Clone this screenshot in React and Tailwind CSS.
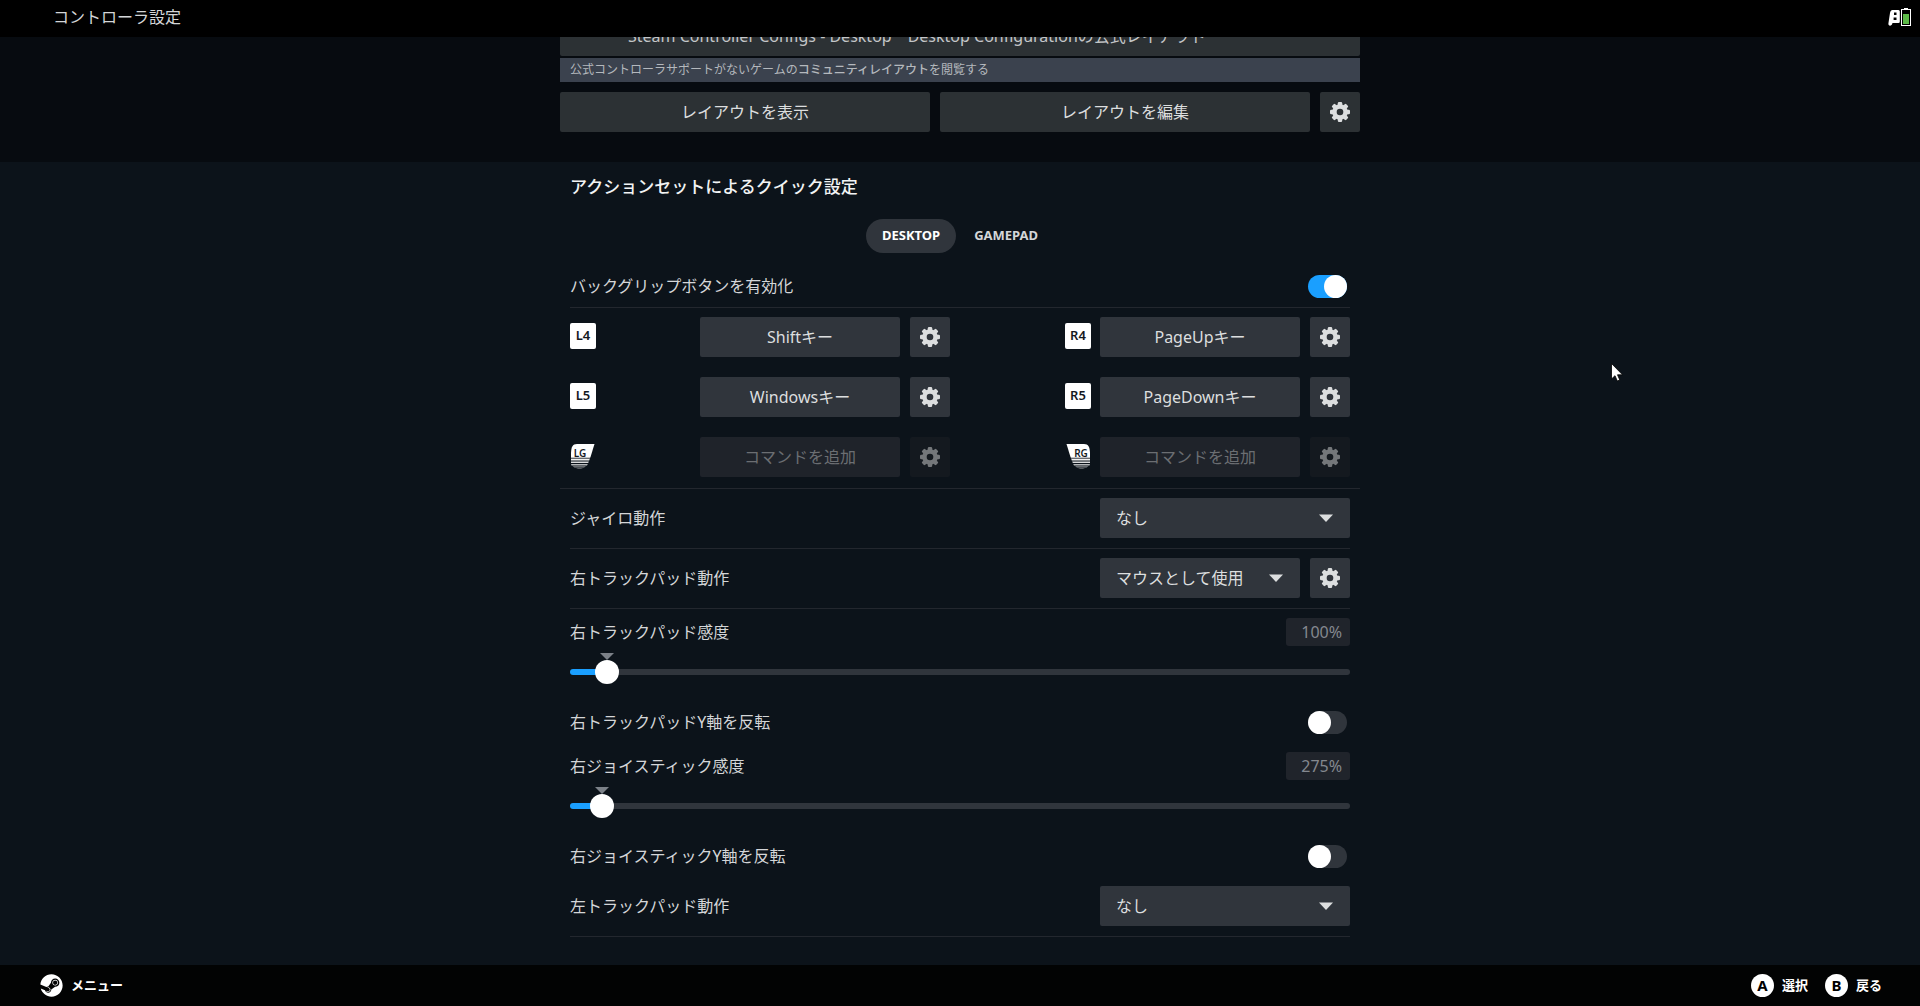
import React, { useState } from 'react';
import { FaSteam } from 'react-icons/fa';

const GearIcon = () => (
  <svg viewBox="0 0 20 20" className="w-5 h-5" fill="currentColor" aria-hidden="true">
    <mask id="gear-hole">
      <rect width="20" height="20" fill="white" />
      <circle cx="10" cy="10" r="3.3" fill="black" />
    </mask>
    <g mask="url(#gear-hole)">
      <circle cx="10" cy="10" r="7.8" />
      {[0, 45, 90, 135].map((angle) => (
        <rect key={angle} x="7.8" y="0" width="4.4" height="20" rx="1.2" transform={`rotate(${angle} 10 10)`} />
      ))}
    </g>
  </svg>
);

const GearButton = ({ label, disabled = false, className = 'bg-[#30353c]' }) => (
  <button
    type="button"
    aria-label={label}
    disabled={disabled}
    className={`w-10 h-10 shrink-0 flex items-center justify-center rounded-xs ${
      disabled ? 'bg-[#14191f] text-[#74777a]' : `text-[#dcdedf] ${className}`
    }`}
  >
    <GearIcon />
  </button>
);

const KeyBadge = ({ name }) => (
  <span className="w-[26px] h-[26px] mb-[3px] flex items-center justify-center rounded-xs bg-white text-[#14191f] text-[13px] leading-none font-semibold">
    {name}
  </span>
);

// Capacitive grip glyph, the right one is the mirrored shape
const GripBadge = ({ name, mirrored = false }) => (
  <svg viewBox="0 0 26 26" className="w-[26px] h-[26px] mb-[3px]" role="img" aria-label={name}>
    <g fill="white" transform={mirrored ? 'translate(26 0) scale(-1 1)' : undefined}>
      <path d="M7 1H24.500L20.500 14H1V10C1.300 4 2.500 1 7 1Z" />
      <path d="M1 14H20.500L19.900 15.500H1Z" opacity="0.75" />
      <path d="M1 16H19.700L19.200 17.500H1Z" opacity="0.95" />
      <path d="M1 18.500H18.800L18.200 20H1Z" opacity="0.85" />
      <path d="M1 21H17.800L17 22.500H1.500Z" opacity="0.7" />
      <path d="M2.500 23.300H16L14 24.600H4.500Z" opacity="0.5" />
      <path d="M6 25H13L11 26H8Z" opacity="0.3" />
    </g>
    <text x={mirrored ? 16 : 10} y="13.5" textAnchor="middle" fontSize="10" fontWeight="600" fill="#14191f">
      {name}
    </text>
  </svg>
);

const Binding = ({ name, command, grip = false, mirrored = false }) => (
  <div className="flex items-center">
    {grip ? <GripBadge name={name} mirrored={mirrored} /> : <KeyBadge name={name} />}
    <button
      type="button"
      disabled={!command}
      className={`ml-auto w-[200px] h-10 rounded-xs ${
        command ? 'bg-[#30353c] text-[#dcdedf]' : 'bg-[#1f232a] text-[#6b6e72]'
      }`}
    >
      {command || 'コマンドを追加'}
    </button>
    <div className="ml-[10px]">
      <GearButton label={`${name}の設定`} disabled={!command} />
    </div>
  </div>
);

const Toggle = ({ id, label, defaultChecked = false }) => {
  const [checked, setChecked] = useState(defaultChecked);
  return (
    <div className="flex items-center justify-between h-6">
      <label htmlFor={id}>{label}</label>
      <input
        id={id}
        type="checkbox"
        role="switch"
        checked={checked}
        onChange={(e) => setChecked(e.target.checked)}
        className="appearance-none w-[39px] h-[23px] mr-[3px] rounded-full bg-[#30353c] checked:bg-[#1a9fff] before:block before:w-[23px] before:h-[23px] before:rounded-full before:bg-white checked:before:ml-4"
      />
    </div>
  );
};

const Dropdown = ({ id, label, options, children, className }) => (
  <div className="flex items-center justify-between">
    <label htmlFor={id}>{label}</label>
    <div className="flex gap-[10px]">
      <div className="relative">
        <select
          id={id}
          className={`appearance-none h-10 pl-4 pr-10 rounded-xs bg-[#30353c] text-[#dcdedf] ${className}`}
        >
          {options.map((option) => (
            <option key={option}>{option}</option>
          ))}
        </select>
        <svg
          viewBox="0 0 14 8"
          className="absolute right-[17px] top-4 w-[14px] h-2 pointer-events-none text-[#dcdedf]"
          fill="currentColor"
          aria-hidden="true"
        >
          <path d="M0 0.500H14L7 8Z" />
        </svg>
      </div>
      {children}
    </div>
  </div>
);

const Slider = ({ id, label, initial, max }) => {
  const [value, setValue] = useState(initial);
  const position = (v) => `calc(12px + (100% - 24px) * ${v / max})`;

  return (
    <div>
      <div className="flex items-center justify-between h-7">
        <label htmlFor={id}>{label}</label>
        <output htmlFor={id} className="w-16 h-7 pr-2 rounded-[3px] bg-[#20242b] text-right leading-7 text-[#84888f]">
          {value}%
        </output>
      </div>
      <div className="relative mt-[14px] h-6">
        <svg
          viewBox="0 0 14 8"
          className="absolute -top-2 -translate-x-1/2 w-[14px] h-2 text-[#7c8188]"
          style={{ left: position(initial) }}
          fill="currentColor"
          aria-hidden="true"
        >
          <path d="M0 1H14L7 8Z" />
        </svg>
        <div
          className="absolute inset-x-0 top-[9px] h-[6px] rounded-full"
          style={{
            background: `linear-gradient(to right, #1a9fff ${position(value)}, #30353c ${position(value)})`,
          }}
        ></div>
        <input
          id={id}
          type="range"
          min="0"
          max={max}
          value={value}
          onChange={(e) => setValue(Number(e.target.value))}
          className="relative block w-full h-6 appearance-none bg-transparent [&::-webkit-slider-thumb]:appearance-none [&::-webkit-slider-thumb]:w-6 [&::-webkit-slider-thumb]:h-6 [&::-webkit-slider-thumb]:rounded-full [&::-webkit-slider-thumb]:bg-white"
        />
      </div>
    </div>
  );
};

const StatusIcons = () => (
  <svg viewBox="0 0 26 20" className="w-[26px] h-5" role="img" aria-label="バッテリー">
    <path
      fillRule="evenodd"
      fill="white"
      d="M5.500 3H11.500Q12.800 3 12.800 4.500V14.500Q12.800 16 11.500 16H5.500L5 17.500Q4 19 2.300 18.500Q1.200 18 1.400 16.500L3 6Q3.500 3 5.500 3ZM7 5.500V8H9.500V5.500ZM6.600 10.500V13H9.500V10.500Z"
    />
    <rect x="17" y="1" width="4" height="2" fill="white" />
    <rect x="14.500" y="2.500" width="9" height="16" fill="black" stroke="white" />
    <rect x="16" y="7" width="6" height="10" fill="#5cb947" />
  </svg>
);

const FooterAction = ({ glyph, label }) => (
  <button type="button" className="flex items-center gap-2 text-[13px] font-bold text-white">
    <span className="w-[23px] h-[23px] flex items-center justify-center rounded-full bg-white text-black text-[15px] leading-none">
      {glyph}
    </span>
    {label}
  </button>
);

const App = () => {
  const [tab, setTab] = useState('DESKTOP');

  return (
    <div className="relative min-h-screen flex flex-col bg-[#0c131a] text-[#d4d6d8] text-base font-['Noto_Sans','Noto_Sans_CJK_JP',sans-serif]">
      <header className="h-[37px] pb-1 pl-[53px] pr-[7px] flex items-center justify-between bg-black">
        <h1>コントローラ設定</h1>
        <StatusIcons />
      </header>

      <main className="flex-1">
        {/* Current layout, scrolled partly under the header */}
        <section className="overflow-hidden bg-[#070b10] pb-[30px]">
          <div className="max-w-[800px] mx-auto">
            <div className="-mt-[21px] h-10 pl-[68px] flex items-center gap-4 rounded-xs bg-[#2c3134] text-[#c4c6c8]">
              <span>Steam Controller Configs - Desktop</span>
              <span>Desktop Configurationの公式レイアウト</span>
            </div>
            <p className="mt-[2px] h-6 pl-[10px] leading-6 text-xs bg-[#3b424e] text-[#b4b8bd]">
              公式コントローラサポートがないゲームの
              <a href="#community" className="font-medium">コミュニティレイアウト</a>
              を閲覧する
            </p>
            <div className="mt-[10px] flex gap-[10px]">
              <button type="button" className="flex-1 h-10 rounded-xs bg-[#2c3134] text-[#dcdedf]">
                レイアウトを表示
              </button>
              <button type="button" className="flex-1 h-10 rounded-xs bg-[#2c3134] text-[#dcdedf]">
                レイアウトを編集
              </button>
              <GearButton label="レイアウトの設定" className="bg-[#2c3134]" />
            </div>
          </div>
        </section>

        {/* Quick settings */}
        <section className="max-w-[800px] mx-auto pt-[13px] pb-7">
          <h2 className="px-[10px] h-6 leading-6 text-[17px] font-medium text-[#f2f3f4]">
            アクションセットによるクイック設定
          </h2>

          <div role="tablist" className="mt-5 h-[34px] flex justify-center gap-[2px] text-[13px] font-bold">
            {['DESKTOP', 'GAMEPAD'].map((name) => (
              <button
                key={name}
                type="button"
                role="tab"
                aria-selected={tab === name}
                onClick={() => setTab(name)}
                className={`px-4 rounded-full ${
                  tab === name ? 'bg-[#30353c] text-white' : 'text-[#d4d6d8]'
                }`}
              >
                {name}
              </button>
            ))}
          </div>

          <div className="mx-[10px] mt-[21px] pb-[9px] border-b border-[#23272e]">
            <Toggle id="back-grip" label="バックグリップボタンを有効化" defaultChecked />
          </div>

          <div className="px-[10px] pt-[9px] pb-[11px] border-b border-[#23272e] flex justify-between">
            <div className="w-[380px] grid gap-5">
              <Binding name="L4" command="Shiftキー" />
              <Binding name="L5" command="Windowsキー" />
              <Binding name="LG" grip />
            </div>
            <div className="w-[285px] grid gap-5">
              <Binding name="R4" command="PageUpキー" />
              <Binding name="R5" command="PageDownキー" />
              <Binding name="RG" grip mirrored />
            </div>
          </div>

          <div className="mx-[10px] pt-[9px] pb-[10px] border-b border-[#23272e]">
            <Dropdown id="gyro" label="ジャイロ動作" options={['なし']} className="w-[250px]" />
          </div>
          <div className="mx-[10px] pt-[9px] pb-[10px] border-b border-[#23272e]">
            <Dropdown
              id="right-pad"
              label="右トラックパッド動作"
              options={['マウスとして使用', 'なし']}
              className="w-[200px]"
            >
              <GearButton label="右トラックパッドの設定" />
            </Dropdown>
          </div>

          <div className="mx-[10px] pt-[9px] pb-[10px] border-b border-[#23272e]">
            <Slider id="right-pad-sensitivity" label="右トラックパッド感度" initial={100} max={3025} />
            <div className="mt-[26px] mb-[18px]">
              <Toggle id="right-pad-invert" label="右トラックパッドY軸を反転" />
            </div>
            <Slider id="right-stick-sensitivity" label="右ジョイスティック感度" initial={275} max={10400} />
            <div className="mt-[26px] mb-[18px]">
              <Toggle id="right-stick-invert" label="右ジョイスティックY軸を反転" />
            </div>
            <Dropdown id="left-pad" label="左トラックパッド動作" options={['なし']} className="w-[250px]" />
          </div>
        </section>
      </main>

      <footer className="h-[41px] pl-10 pr-[38px] flex items-center justify-between bg-[#020303] text-white">
        <button type="button" className="flex items-center gap-2 text-[13px] font-bold">
          <FaSteam className="w-[23px] h-[23px]" />
          メニュー
        </button>
        <div className="flex gap-[17px]">
          <FooterAction glyph="A" label="選択" />
          <FooterAction glyph="B" label="戻る" />
        </div>
      </footer>

      {/* Mouse pointer */}
      <svg
        viewBox="0 0 12 19"
        className="absolute left-[84%] top-[363px] -ml-[2px] w-3 h-[19px] pointer-events-none"
        aria-hidden="true"
      >
        <path d="M0.500 0.500V16L4 12.700L6.300 18L8.800 17L6.500 11.800H11.500Z" fill="white" stroke="black" strokeWidth="0.800" />
      </svg>
    </div>
  );
};

export default App;
